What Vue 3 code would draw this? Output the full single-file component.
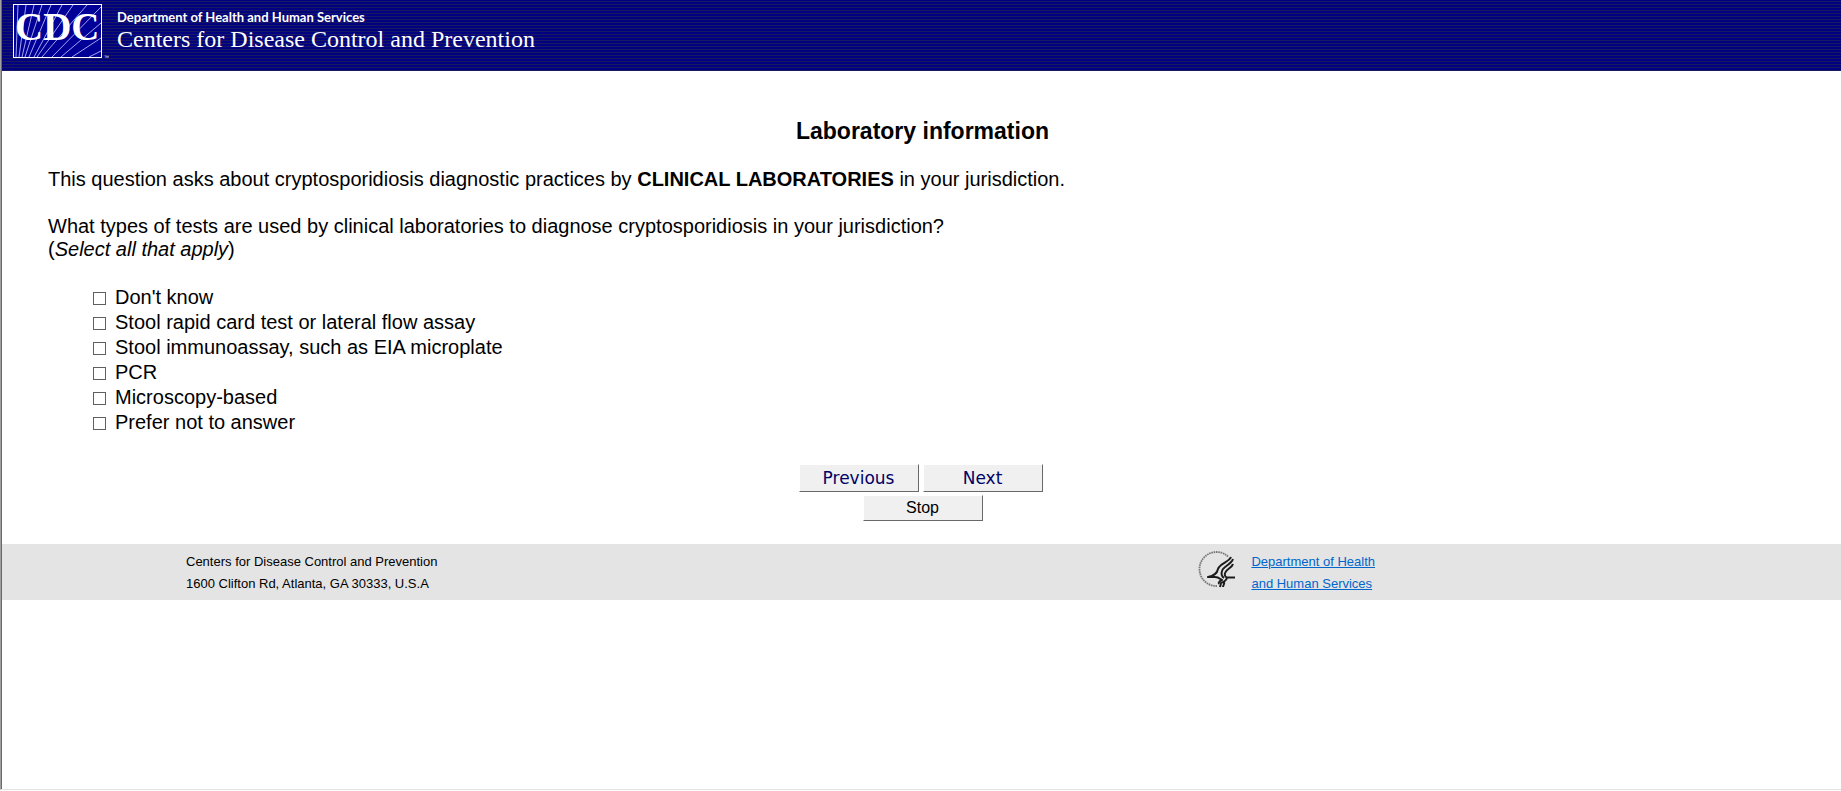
<script setup>
import { ref } from 'vue'

const options = [
  "Don't know",
  'Stool rapid card test or lateral flow assay',
  'Stool immunoassay, such as EIA microplate',
  'PCR',
  'Microscopy-based',
  'Prefer not to answer',
]
const selected = ref([])
</script>

<template>
  <div class="frame">
    <div class="page">
      <header class="banner">
        <svg class="logo" viewBox="0 0 98 56" role="img" aria-label="CDC">
          <rect x="0.5" y="0.5" width="88" height="53" fill="#000099" />
          <path
            d="M5 1L3 53M13 1L6 53M21 1L9 53M29 1L12 53M38 1L16 53M49 1L21 53M60 1L24 53M74 1L29 53M88 3L39 53M88 19L48 53M88 34L59 53M88 47L76 53"
            fill="none"
            stroke="#a5a5ee"
          />
          <rect x="0.5" y="0.5" width="88" height="53" fill="none" stroke="#fff" />
          <text x="2" y="36" class="cdc">CDC</text>
          <text x="91" y="55" class="tm">™</text>
        </svg>
        <div class="titles">
          <div class="dept">Department of Health and Human Services</div>
          <div class="agency">Centers for Disease Control and Prevention</div>
        </div>
      </header>

      <main class="survey">
        <h1>Laboratory information</h1>
        <p>This question asks about cryptosporidiosis diagnostic practices by <b>CLINICAL LABORATORIES</b> in your jurisdiction.</p>
        <fieldset>
          <legend>What types of tests are used by clinical laboratories to diagnose cryptosporidiosis in your jurisdiction?<br />(<i>Select all that apply</i>)</legend>
          <ul>
            <li v-for="(option, i) in options" :key="option">
              <input :id="`option-${i}`" v-model="selected" type="checkbox" :value="option" />
              <label :for="`option-${i}`">{{ option }}</label>
            </li>
          </ul>
        </fieldset>
        <div class="actions">
          <div class="nav">
            <button type="button">Previous</button>
            <button type="button">Next</button>
          </div>
          <button type="button" class="stop">Stop</button>
        </div>
      </main>

      <footer>
        <address>Centers for Disease Control and Prevention<br />1600 Clifton Rd, Atlanta, GA 30333, U.S.A</address>
        <div class="hhs">
          <svg class="seal" viewBox="0 0 38 38" aria-hidden="true">
            <path d="M30 5.5A17 17 0 1 0 19 35" fill="none" stroke="#777" stroke-width="1.8" stroke-dasharray="1.6 0.7" />
            <g fill="none" stroke="#1c1c1c" stroke-width="2" stroke-linejoin="round">
              <path d="M33 6C31 11 21 13 20 18C19 23 16 25 10 26H17C21 26 22 28 24 29C22 30 20 31 21 33" />
              <path d="M35 8C33 14 25 15 24 20C23 23 23 25 26 27" />
              <path d="M35 13C34 17 28 18 27 22C26 25 28 27 31 26.500H37" />
              <path d="M29 27C28 30 26 31 23 32L22 36M26 31C27 33 25 34 25 36" />
            </g>
          </svg>
          <a href="#">Department of Health<br />and Human Services</a>
        </div>
      </footer>
    </div>
  </div>
</template>

<style>
body {
  margin: 0;
  background: #fff;
}
</style>

<style scoped>
.frame {
  display: flex;
  box-sizing: border-box;
  min-height: calc(100vh - 1px);
  border-left: 1px solid #a0a0a0;
  border-bottom: 1px solid #e3e3e3;
}
.page {
  flex: 1;
  border-left: 1px solid #696969;
  font-family: "Liberation Sans", Arial, sans-serif;
  font-size: 20px;
  line-height: 23px;
  color: #000;
}
.banner {
  display: flex;
  gap: 6px;
  height: 71px;
  padding: 4px 11px 0;
  box-sizing: border-box;
  background: repeating-linear-gradient(#000080 0 1px, #191960 1px 2px, #000080 2px 3px);
  color: #fff;
}
.logo {
  flex: none;
  width: 98px;
  height: 56px;
}
.cdc {
  font: bold 39px "Liberation Serif", serif;
  fill: #fff;
}
.tm {
  font: 5px "Liberation Sans", sans-serif;
  fill: #fff;
}
.dept {
  padding-top: 4px;
  font: bold 13px/18px Lato, sans-serif;
}
.agency {
  font: 24px/26px "Liberation Serif", serif;
}
.survey {
  padding: 48px 44px 23px 46px;
}
h1 {
  margin: 0 0 25px;
  font-size: 23px;
  line-height: 24px;
  text-align: center;
}
p {
  margin: 0 0 24px;
}
fieldset {
  margin: 0;
  padding: 0;
  border: 0;
}
legend {
  padding: 0;
}
ul {
  margin: 24px 0 0 45px;
  padding: 0;
  list-style: none;
}
li {
  display: flex;
  align-items: center;
  gap: 9px;
  height: 25px;
}
input {
  appearance: none;
  width: 13px;
  height: 13px;
  margin: 2px 0 0;
  border: 1px solid #606060;
  background: #fff;
}
input:checked {
  background: #606060;
}
.actions {
  display: flex;
  flex-direction: column;
  align-items: center;
  gap: 3px;
  padding-top: 29px;
}
.nav {
  display: flex;
  gap: 4px;
  padding-right: 4px;
}
button {
  width: 120px;
  height: 28px;
  padding: 0;
  border: 1px solid #696969;
  border-top-color: #fff;
  border-left-color: #fff;
  background: #f0f0f0;
  font: 17px "DejaVu Sans", Verdana, sans-serif;
  color: #000066;
}
.stop {
  height: 26px;
  font: 16px "Liberation Sans", Arial, sans-serif;
  color: #000;
}
footer {
  display: flex;
  justify-content: space-between;
  box-sizing: border-box;
  height: 56px;
  padding: 7px 466px 0 184px;
  background: #e4e4e4;
  font-size: 13px;
  line-height: 22px;
}
address {
  font-style: normal;
}
.hhs {
  display: flex;
  gap: 15px;
}
.seal {
  width: 38px;
  height: 38px;
}
a {
  color: #0066cc;
}
</style>
